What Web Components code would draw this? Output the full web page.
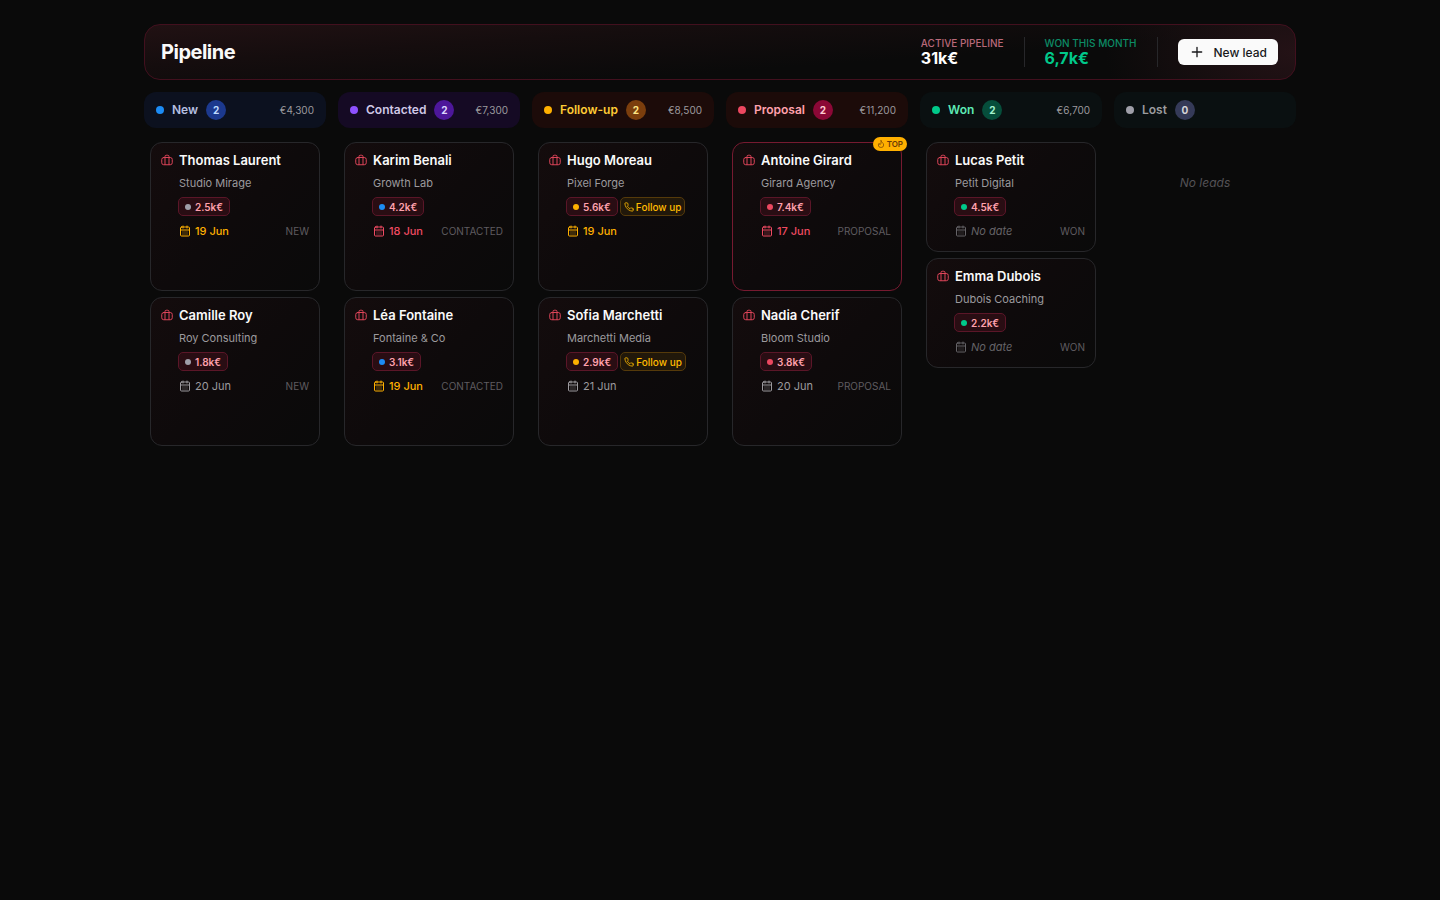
<!DOCTYPE html>
<html lang="en">
<head>
<meta charset="utf-8">
<meta name="viewport" content="width=device-width, initial-scale=1">
<title>Pipeline</title>
<style>
  * { box-sizing: border-box; }
  body {
    margin: 0;
    min-height: 100vh;
    background: #0a0a0a;
    color: #fafafa;
    font-family: Inter, "Liberation Sans", sans-serif;
  }
</style>
</head>
<body>
<pipeline-board></pipeline-board>

<script>
const icons = {
  plus: '<path d="M5 12h14M12 5v14"/>',
  luggage: '<rect x="1.500" y="7" width="21" height="14.500" rx="4"/><path d="M8 21V5a2.500 2.500 0 0 1 2.500-2.500h3A2.500 2.500 0 0 1 16 5v16"/>',
  calendar: '<rect x="3" y="4" width="18" height="18" rx="2"/><path d="M8 2v4M16 2v4M3 10h18M8 14h.01M12 14h.01M16 14h.01M8 18h.01M12 18h.01M16 18h.01"/>',
  phone: '<path d="M22 16.92v3a2 2 0 0 1-2.18 2 19.8 19.8 0 0 1-8.63-3.07 19.5 19.5 0 0 1-6-6A19.8 19.8 0 0 1 2.12 4.18 2 2 0 0 1 4.11 2h3a2 2 0 0 1 2 1.72c.13.96.36 1.9.7 2.81a2 2 0 0 1-.45 2.11L8.09 9.91a16 16 0 0 0 6 6l1.27-1.27a2 2 0 0 1 2.11-.45c.91.34 1.85.57 2.81.7A2 2 0 0 1 22 16.92z"/>',
  flame: '<path d="M12 2c0 4 8 7 8 13a8 7.500 0 0 1-16 0c0-2 1-4 2.500-5 0 2 1 4 3 4 3-2 3-7 2.500-12z"/>'
};

const columns = [
  { name: 'New', total: '€4,300', dot: '#1c8cf5', text: '#b4bfe0', bg: '#0c111f', badge: '#1c398e', badgeText: '#bedbff', leads: [
    { name: 'Thomas Laurent', company: 'Studio Mirage', value: '2.5k€', dot: '#9f9fa9', date: '19 Jun', due: 'soon', stage: 'NEW' },
    { name: 'Camille Roy', company: 'Roy Consulting', value: '1.8k€', dot: '#9f9fa9', date: '20 Jun', due: 'later', stage: 'NEW' }
  ] },
  { name: 'Contacted', total: '€7,300', dot: '#8e51ff', text: '#d0c8e6', bg: '#150a24', badge: '#4d179a', badgeText: '#ddd6ff', leads: [
    { name: 'Karim Benali', company: 'Growth Lab', value: '4.2k€', dot: '#1c8cf5', date: '18 Jun', due: 'late', stage: 'CONTACTED' },
    { name: 'Léa Fontaine', company: 'Fontaine & Co', value: '3.1k€', dot: '#1c8cf5', date: '19 Jun', due: 'soon', stage: 'CONTACTED' }
  ] },
  { name: 'Follow-up', total: '€8,500', dot: '#ffb000', text: '#ffcb35', bg: '#1c0b09', badge: '#7b3e0d', badgeText: '#fee685', leads: [
    { name: 'Hugo Moreau', company: 'Pixel Forge', value: '5.6k€', dot: '#ffb000', date: '19 Jun', due: 'soon', follow: true },
    { name: 'Sofia Marchetti', company: 'Marchetti Media', value: '2.9k€', dot: '#ffb000', date: '21 Jun', due: 'later', follow: true }
  ] },
  { name: 'Proposal', total: '€11,200', dot: '#ec4860', text: '#ffa1ad', bg: '#1c0b09', badge: '#8b0836', badgeText: '#ffccd3', leads: [
    { name: 'Antoine Girard', company: 'Girard Agency', value: '7.4k€', dot: '#ec4860', date: '17 Jun', due: 'late', stage: 'PROPOSAL', top: true },
    { name: 'Nadia Cherif', company: 'Bloom Studio', value: '3.8k€', dot: '#ec4860', date: '20 Jun', due: 'later', stage: 'PROPOSAL' }
  ] },
  { name: 'Won', total: '€6,700', dot: '#00c98a', text: '#5ee9b5', bg: '#0a1011', badge: '#064e3b', badgeText: '#a4f4cf', leads: [
    { name: 'Lucas Petit', company: 'Petit Digital', value: '4.5k€', dot: '#00c98a', stage: 'WON', closed: true },
    { name: 'Emma Dubois', company: 'Dubois Coaching', value: '2.2k€', dot: '#00c98a', stage: 'WON', closed: true }
  ] },
  { name: 'Lost', total: '', dot: '#9f9fa9', text: '#9c9c9f', bg: '#0a1011', badge: '#353a58', badgeText: '#d4d4d8', leads: [] }
];

class UiIcon extends HTMLElement {
  constructor() {
    super();
    this.attachShadow({ mode: 'open' });
  }
  connectedCallback() {
    this.shadowRoot.innerHTML = `
      <style>
        :host { display: inline-flex; flex: none; width: 12px; height: 12px; }
        svg { width: 100%; height: 100%; }
      </style>
      <svg viewBox="0 0 24 24" fill="none" stroke="currentColor" stroke-width="2"
        stroke-linecap="round" stroke-linejoin="round" aria-hidden="true">${icons[this.getAttribute('name')]}</svg>`;
  }
}

class PipelineStat extends HTMLElement {
  constructor() {
    super();
    this.attachShadow({ mode: 'open' });
    this.shadowRoot.innerHTML = `
      <style>
        :host {
          display: flex;
          flex-direction: column;
          padding-right: 20px;
          border-right: 1px solid #27272a;
          color: #fff;
          --label: #b9697a;
        }
        :host([tone="won"]) { color: #00c98a; --label: #0c8c66; }
        .label { font-size: 10px; line-height: 12px; font-weight: 500; color: var(--label); }
        .value { font-size: 16px; line-height: 18px; font-weight: 700; }
      </style>
      <span class="label"><slot name="label"></slot></span>
      <span class="value"><slot></slot></span>`;
  }
}

class LeadCard extends HTMLElement {
  constructor() {
    super();
    this.attachShadow({ mode: 'open' });
  }
  connectedCallback() {
    const lead = this.lead;
    this.shadowRoot.innerHTML = `
      <style>
        * { box-sizing: border-box; }
        :host { display: block; }
        article {
          position: relative;
          display: flex;
          flex-direction: column;
          min-height: 149px;
          padding: 7px 10px 11px;
          border: 1px solid #27272a;
          border-radius: 12px;
          background: linear-gradient(135deg, #140c0d 0%, #0e0a0b 50%, #0a0a0a 100%);
        }
        article.closed { min-height: 110px; }
        article.top { border-color: #761a30; }
        header { display: flex; align-items: center; gap: 6px; }
        header ui-icon { color: #dc4459; }
        h3 { margin: 0; font-size: 13px; line-height: 20px; font-weight: 600; white-space: nowrap; color: #fafafa; }
        .body { display: flex; flex-direction: column; padding-left: 18px; }
        .company { margin: 5px 0 6px; font-size: 11px; line-height: 16px; color: #9c9a9e; }
        .tags { display: flex; gap: 2px; margin: 0 0 6px -1px; }
        .tag {
          display: flex;
          align-items: center;
          height: 19px;
          gap: 4px;
          padding: 0 6px;
          border: 1px solid #5b1628;
          border-radius: 5px;
          background: #290d13;
          color: #ffa1ad;
          font-size: 10px;
          font-weight: 600;
          white-space: nowrap;
        }
        .tag i { width: 6px; height: 6px; border-radius: 50%; background: ${lead.dot}; }
        .tag.follow { gap: 2px; padding: 0 3px; border-color: #553a0a; background: #21180a; color: #ffba00; font-weight: 500; }
        .follow ui-icon { width: 10px; height: 10px; }
        .foot { display: flex; align-items: center; justify-content: space-between; line-height: 18px; }
        .date { display: flex; align-items: center; gap: 4px; font-size: 11px; white-space: nowrap; }
        .soon { color: #ffb000; font-weight: 500; }
        .late { color: #f04a62; font-weight: 500; }
        .later { color: #9c9a9e; }
        .none { color: #656367; font-style: italic; }
        .stage { font-size: 10px; color: #5f5c60; }
        .badge {
          position: absolute;
          top: -6px;
          right: -6px;
          display: flex;
          align-items: center;
          gap: 2px;
          height: 14px;
          padding: 0 4px;
          border-radius: 7px;
          background: #ffb000;
          color: #6b3a06;
          font-size: 8px;
          font-weight: 600;
        }
        .badge ui-icon { width: 8px; height: 8px; }
      </style>
      <article class="${lead.top ? 'top' : ''} ${lead.closed ? 'closed' : ''}">
        ${lead.top ? '<span class="badge"><ui-icon name="flame"></ui-icon>TOP</span>' : ''}
        <header><ui-icon name="luggage"></ui-icon><h3>${lead.name}</h3></header>
        <div class="body">
          <p class="company">${lead.company.replace('&', '&amp;')}</p>
          <div class="tags">
            <span class="tag"><i></i>${lead.value}</span>
            ${lead.follow ? '<span class="tag follow"><ui-icon name="phone"></ui-icon>Follow up</span>' : ''}
          </div>
          <div class="foot">
            <span class="date ${lead.due || 'none'}"><ui-icon name="calendar"></ui-icon>${lead.date || 'No date'}</span>
            ${lead.stage ? `<span class="stage">${lead.stage}</span>` : ''}
          </div>
        </div>
      </article>`;
  }
}

class PipelineColumn extends HTMLElement {
  constructor() {
    super();
    this.attachShadow({ mode: 'open' });
  }
  connectedCallback() {
    const col = this.column;
    this.shadowRoot.innerHTML = `
      <style>
        * { box-sizing: border-box; }
        :host { display: block; min-width: 0; }
        header {
          display: flex;
          align-items: center;
          gap: 8px;
          height: 36px;
          padding: 0 12px;
          border-radius: 12px;
          background: ${col.bg};
        }
        .dot { width: 8px; height: 8px; border-radius: 50%; background: ${col.dot}; }
        h2 { margin: 0; font-size: 12px; line-height: 16px; font-weight: 600; color: ${col.text}; }
        .count {
          display: grid;
          place-items: center;
          width: 20px;
          height: 20px;
          border-radius: 50%;
          background: ${col.badge};
          color: ${col.badgeText};
          font-size: 10px;
          font-weight: 700;
        }
        .total { margin-left: auto; font-size: 10px; color: #9c9a9e; }
        .list { display: flex; flex-direction: column; gap: 6px; padding: 14px 6px 0; }
        .empty { margin: 32px 0 0; text-align: center; font-size: 12px; line-height: 18px; font-style: italic; color: #545256; }
      </style>
      <section>
        <header>
          <span class="dot"></span>
          <h2>${col.name}</h2>
          <span class="count">${col.leads.length}</span>
          <span class="total">${col.total}</span>
        </header>
        <div class="list">${col.leads.length ? '' : '<p class="empty">No leads</p>'}</div>
      </section>`;
    const list = this.shadowRoot.querySelector('.list');
    for (const lead of col.leads) {
      const card = document.createElement('lead-card');
      card.lead = lead;
      list.appendChild(card);
    }
  }
}

class PipelineBoard extends HTMLElement {
  constructor() {
    super();
    this.attachShadow({ mode: 'open' });
  }
  connectedCallback() {
    this.shadowRoot.innerHTML = `
      <style>
        * { box-sizing: border-box; }
        :host { display: block; }
        main { max-width: 1200px; margin: 0 auto; padding: 24px; }
        .bar {
          display: flex;
          align-items: center;
          justify-content: space-between;
          height: 56px;
          padding: 0 17px 0 16px;
          border: 1px solid #42101e;
          border-radius: 16px;
          background:
            radial-gradient(ellipse 190px 110px at 100% 50%, #241216 0%, #20111499 50%, transparent 100%),
            linear-gradient(176deg, #211113 0%, #150d0e 30%, #0a0a0a 65%);
        }
        h1 { margin: 0; font-size: 20px; line-height: 28px; font-weight: 700; letter-spacing: -0.5px; }
        .stats { display: flex; align-items: center; gap: 20px; }
        button {
          display: flex;
          align-items: center;
          gap: 9px;
          height: 26px;
          padding: 0 11px;
          border: 0;
          border-radius: 6px;
          background: #fafafa;
          color: #18181b;
          font: 500 12px Inter, "Liberation Sans", sans-serif;
        }
        button ui-icon { width: 16px; height: 16px; }
        .columns { display: grid; grid-template-columns: repeat(6, minmax(0, 1fr)); gap: 12px; margin-top: 12px; }
      </style>
      <main>
        <div class="bar">
          <h1>Pipeline</h1>
          <div class="stats">
            <pipeline-stat><span slot="label">ACTIVE PIPELINE</span>31k€</pipeline-stat>
            <pipeline-stat tone="won"><span slot="label">WON THIS MONTH</span>6,7k€</pipeline-stat>
            <button type="button"><ui-icon name="plus"></ui-icon>New lead</button>
          </div>
        </div>
        <div class="columns"></div>
      </main>`;
    const grid = this.shadowRoot.querySelector('.columns');
    for (const column of columns) {
      const el = document.createElement('pipeline-column');
      el.column = column;
      grid.appendChild(el);
    }
  }
}

customElements.define('ui-icon', UiIcon);
customElements.define('pipeline-stat', PipelineStat);
customElements.define('lead-card', LeadCard);
customElements.define('pipeline-column', PipelineColumn);
customElements.define('pipeline-board', PipelineBoard);
</script>
</body>
</html>
